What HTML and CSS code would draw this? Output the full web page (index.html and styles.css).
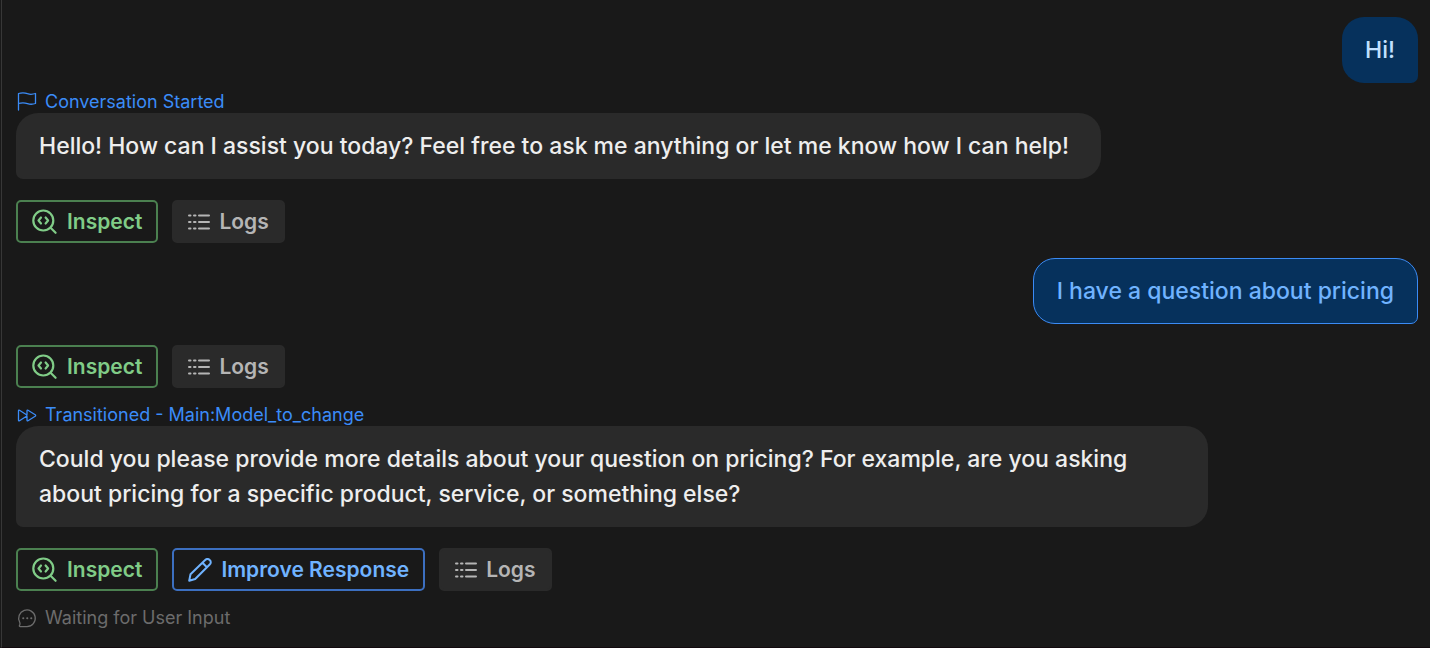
FILE: index.html
```html
<!DOCTYPE html>
<html lang="en">
<head>
<meta charset="utf-8">
<meta name="viewport" content="width=device-width, initial-scale=1">
<title>Conversation</title>
<link rel="stylesheet" href="styles.css">
</head>
<body>
<svg class="sprite" aria-hidden="true">
  <symbol id="inspect" viewBox="0 0 26 26"><circle cx="11.300" cy="11.500" r="10"/><path d="M18.800 19l4.800 4.800M9 8.500l-2.500 3 2.500 3M13.600 8.500l2.500 3-2.500 3"/></symbol>
  <symbol id="logs" viewBox="0 0 22 18"><path d="M1 2.500h1.500M6 2.500h1.500M11 2.500h10M1 9h1.500M6 9h1.500M11 9h10M1 15.500h1.500M6 15.500h1.500M11 15.500h10"/></symbol>
  <symbol id="pencil" viewBox="0 0 24 24"><path d="M1.200 22.800l1.300-6.600L17.200 2a2.900 2.900 0 0 1 4.500 0 2.900 2.900 0 0 1 0 4.500L7.200 21zM14.500 4.800l4.400 4.400"/></symbol>
</svg>
<main class="chat">
  <p class="bubble user">Hi!</p>

  <section class="turn">
    <div class="status">
      <svg class="status-icon" viewBox="0 0 20 20" aria-hidden="true"><path d="M1.500 18V1.500c4-1.200 6.500-.8 9 .2 2.500.9 5 .8 8-.2v10c-3 1-5.500 1-8 .1-2.500-.9-5-1.400-9-.1"/></svg>
      <span>Conversation Started</span>
    </div>
    <p class="bubble agent">Hello! How can I assist you today? Feel free to ask me anything or let me know how I can help!</p>
    <div class="actions">
      <button class="btn inspect" type="button"><svg class="icon-inspect" aria-hidden="true"><use href="#inspect"/></svg>Inspect</button>
      <button class="btn logs" type="button"><svg class="icon-logs" aria-hidden="true"><use href="#logs"/></svg>Logs</button>
    </div>
  </section>

  <p class="bubble user choice">I have a question about pricing</p>

  <div class="actions">
    <button class="btn inspect" type="button"><svg class="icon-inspect" aria-hidden="true"><use href="#inspect"/></svg>Inspect</button>
    <button class="btn logs" type="button"><svg class="icon-logs" aria-hidden="true"><use href="#logs"/></svg>Logs</button>
  </div>

  <section class="turn">
    <div class="status">
      <svg class="status-icon" viewBox="0 0 20 20" aria-hidden="true"><path d="M1.500 5.800v9.400c0 .6.500.8 1 .5l7-4.500c.6-.4.600-1 0-1.400l-7-4.500c-.5-.3-1-.1-1 .5zM10 9.500V5.800c0-.6.500-.8 1-.5l7.200 4.500c.6.400.6 1 0 1.400L11 15.700c-.5.300-1 .1-1-.5v-3.700"/></svg>
      <span>Transitioned - Main:Model_to_change</span>
    </div>
    <p class="bubble agent">Could you please provide more details about your question on pricing? For example, are you asking about pricing for a specific product, service, or something else?</p>
    <div class="actions">
      <button class="btn inspect" type="button"><svg class="icon-inspect" aria-hidden="true"><use href="#inspect"/></svg>Inspect</button>
      <button class="btn improve" type="button"><svg class="icon-pencil" aria-hidden="true"><use href="#pencil"/></svg>Improve Response</button>
      <button class="btn logs" type="button"><svg class="icon-logs" aria-hidden="true"><use href="#logs"/></svg>Logs</button>
    </div>
  </section>

  <div class="status waiting">
    <svg class="status-icon" viewBox="0 0 20 20" aria-hidden="true"><path d="M3.200 18.600H10a8.300 8.300 0 1 0-7.300-4.300c.3.600.4 1.200.2 1.900l-.5 1.500c-.1.500.2.900.8.900z"/><path class="dots" d="M6.200 10.300h.1M10.200 10.300h.1M14.200 10.300h.1"/></svg>
    <span>Waiting for User Input</span>
  </div>
</main>
</body>
</html>
```
FILE: styles.css
```css
* { box-sizing: border-box; }

body {
  margin: 0;
  background: #191919;
  font-family: Inter, "Liberation Sans", sans-serif;
}

.sprite { display: none; }

svg {
  flex: none;
  fill: none;
  stroke: currentColor;
  stroke-linecap: round;
  stroke-linejoin: round;
}

.chat {
  display: flex;
  flex-direction: column;
  min-height: 100vh;
  margin-left: 1px;
  padding: 17px 12px 0 14px;
  border-left: 1px solid #373737;
  border-bottom: 1px solid #120a0e;
}

.bubble {
  max-width: 85%;
  margin: 0;
  padding: 16px 23px 15px;
  border-radius: 22px;
  font-size: 23px;
  font-weight: 500;
  line-height: 35px;
}

.agent {
  width: fit-content;
  padding-right: 32px;
  border-bottom-left-radius: 7px;
  background: #2a2a2a;
  color: #eee;
}

.user {
  align-self: flex-end;
  border-bottom-right-radius: 7px;
  background: #06315c;
  color: #c2e0ff;
}

.choice {
  margin-top: 15px;
  padding: 15px 23px 14px;
  border: 1px solid #3b8bf5;
  color: #70b3ff;
}

.turn { margin-top: 7px; }

.actions + .turn { margin-top: 15px; }

.status {
  display: flex;
  align-items: center;
  gap: 8px;
  height: 23px;
  padding-left: 1px;
  color: #3b8cf8;
  font-size: 18px;
  line-height: 23px;
}

.status-icon {
  width: 20px;
  height: 20px;
  stroke-width: 1.3;
}

.waiting {
  margin-top: 15px;
  color: #6c6c6c;
}

.dots { stroke-width: 2; }

.actions {
  display: flex;
  flex-wrap: wrap;
  gap: 14px;
  margin-top: 21px;
}

.btn {
  display: flex;
  align-items: center;
  gap: 9px;
  height: 43px;
  padding: 0 14px;
  border: 2px solid transparent;
  border-radius: 5px;
  background: transparent;
  font: 600 21px/28px Inter, "Liberation Sans", sans-serif;
}

.inspect { border-color: #4b8050; color: #80cc87; }
.improve { border-color: #3c6fc0; color: #70b3ff; }
.logs { border-color: #2a2a2a; background: #2a2a2a; color: #b5b5b5; }

.icon-inspect { width: 26px; height: 26px; stroke-width: 2.2; }
.icon-logs { width: 22px; height: 18px; stroke-width: 2; }
.icon-pencil { width: 24px; height: 24px; stroke-width: 2; }
```
